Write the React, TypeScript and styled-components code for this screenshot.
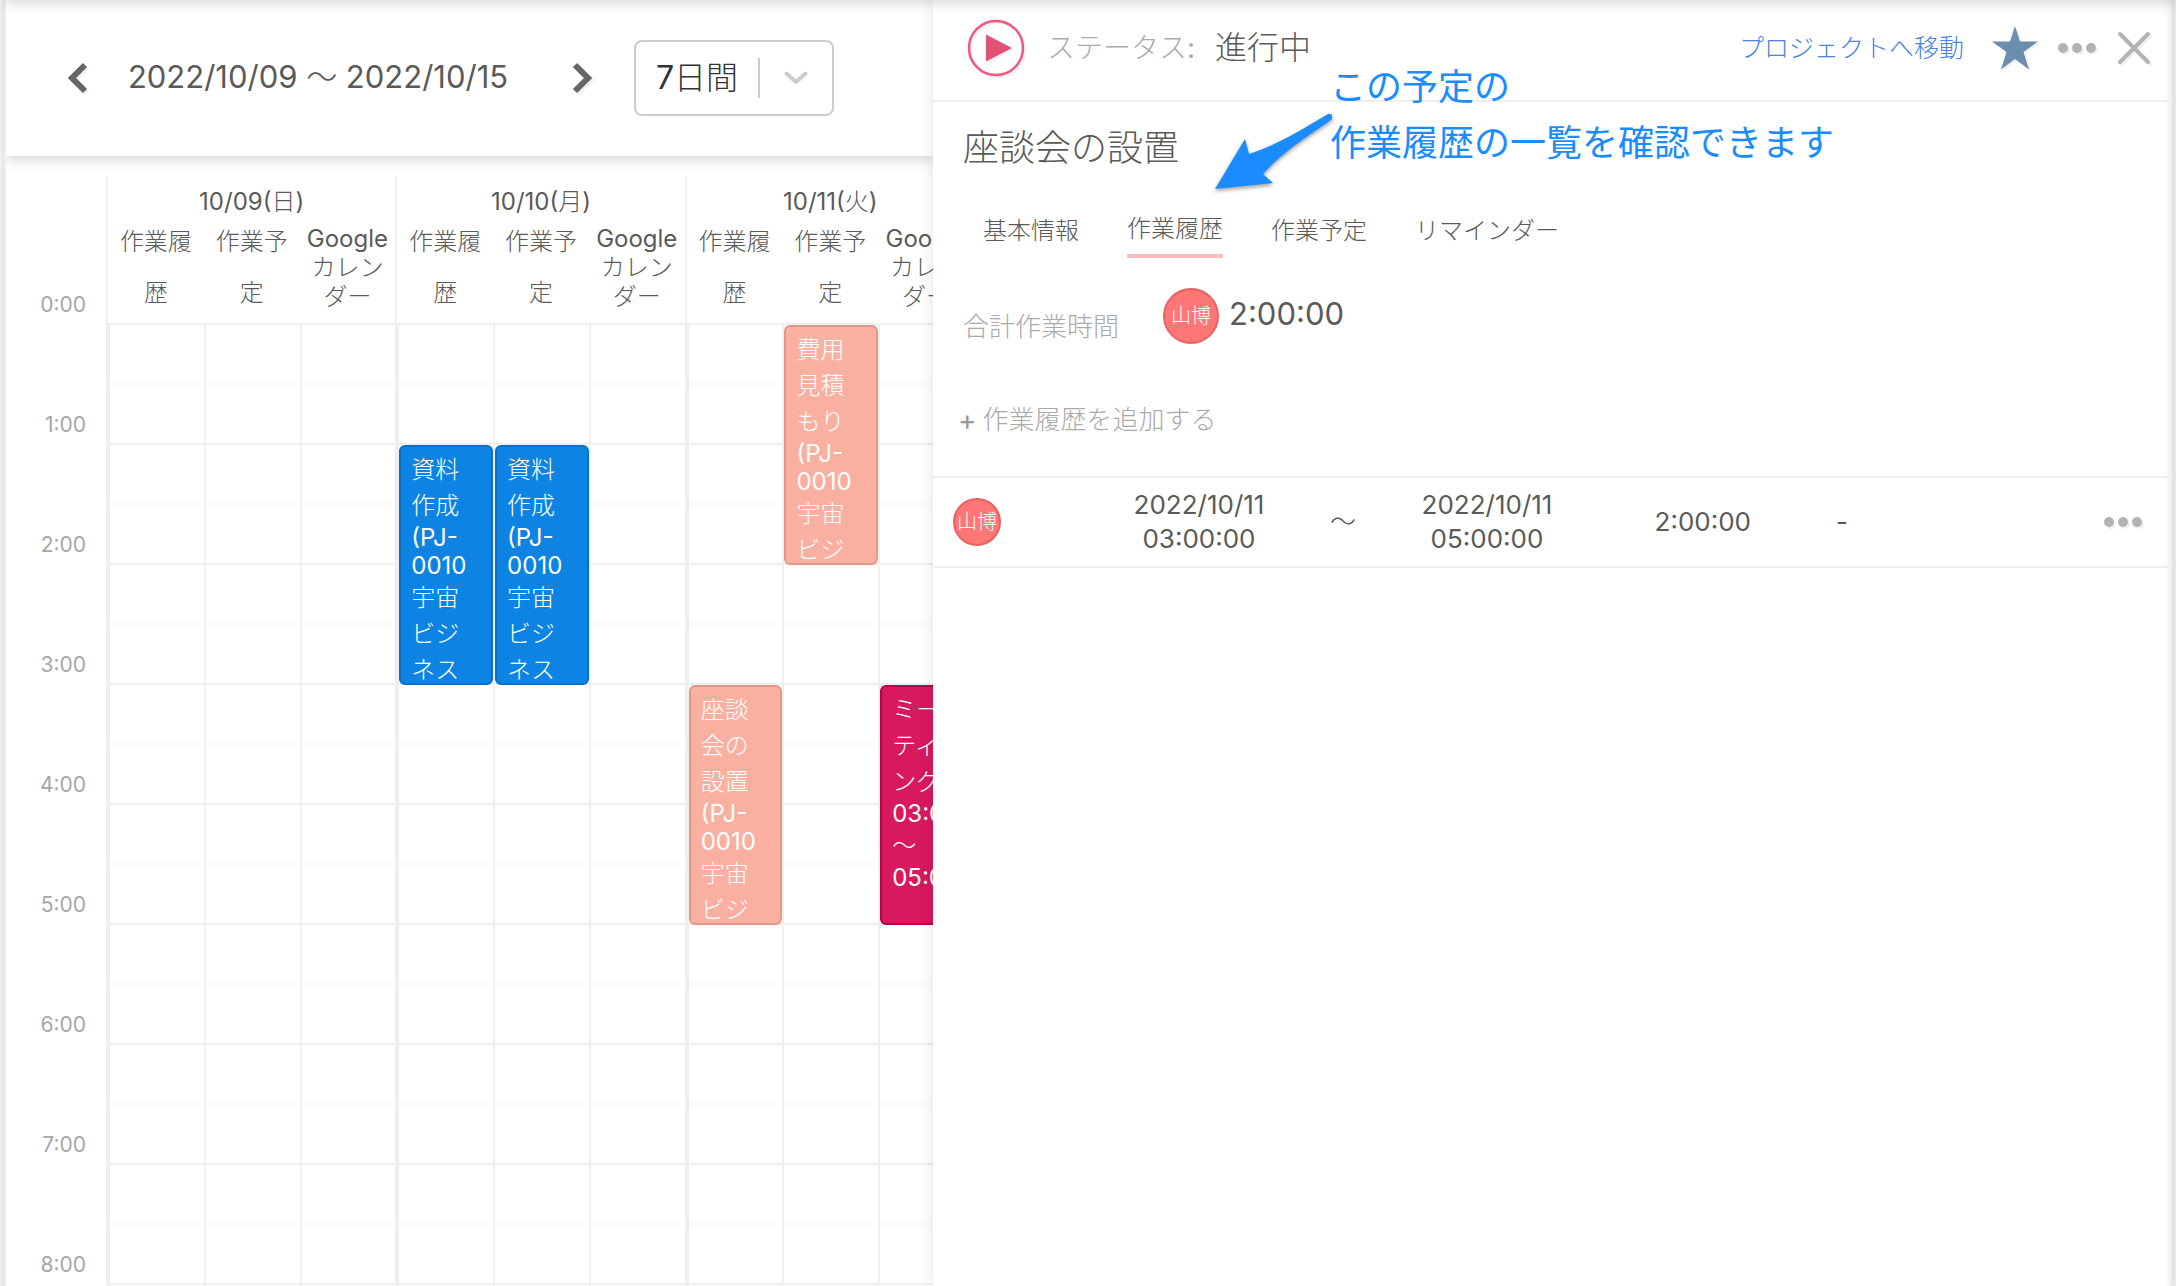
import React from "react";
import styled, { createGlobalStyle, css } from "styled-components";

const GlobalStyle = createGlobalStyle`
  *, *::before, *::after { box-sizing: border-box; }
  body {
    margin: 0;
    background: #fff;
    color: #5a5a58;
    font-family: Inter, "Noto Sans CJK JP Light", "Noto Sans CJK JP", sans-serif;
    font-size: 24px;
    font-weight: 400;
    line-height: 36px;
  }
  button, select { font: inherit; color: inherit; background: none; border: 0; margin: 0; padding: 0; cursor: pointer; }
  h1, h2, p, dl, dt, dd { margin: 0; font: inherit; }
`;

const Page = styled.div`
  position: relative;
  display: flex;
  height: 100vh;
  overflow: hidden;
  padding: 0 4px 0 6px;
  background: linear-gradient(90deg, #efefef 2px, #e6e6e6 2px 4px, #efefef 4px);
  &::before {
    content: "";
    position: absolute;
    inset: -10px 0 auto 6px;
    height: 10px;
    z-index: 3;
    box-shadow: 0 2px 12px 2px rgba(0, 0, 0, 0.14);
    pointer-events: none;
  }
`;

/* ---------- calendar ---------- */

const CalendarPane = styled.main`
  flex: 927 1 0;
  min-width: 0;
  overflow: hidden;
  background: #fff;
`;

const Toolbar = styled.header`
  position: relative;
  z-index: 1;
  display: flex;
  align-items: center;
  height: 156px;
  padding-left: 56px;
  box-shadow: 0 2px 12px 2px rgba(0, 0, 0, 0.16);
  background: #fff;
`;

const IconButton = styled.button`
  display: flex;
  align-items: center;
  justify-content: center;
  flex: none;
  svg { display: block; filter: drop-shadow(2px 2px 0 rgba(0, 0, 0, 0.06)); }
`;

const DateRange = styled.h1`
  width: 472px;
  padding: 0 24px 2px 0;
  text-align: center;
  white-space: nowrap;
  font-size: 31px;
  line-height: 48px;
`;

const SelectBox = styled.label`
  display: flex;
  align-items: center;
  width: 200px;
  height: 76px;
  margin-left: 36px;
  border: 2px solid #ccc;
  border-radius: 8px;
  color: #333;
  select {
    appearance: none;
    outline: none;
    width: 122px;
    height: 72px;
    padding-left: 20px;
    font-size: 32px;
  }
  svg { margin: 0 auto; }
`;

const SelectDivider = styled.span`
  width: 2px;
  height: 40px;
  background: #ccc;
`;

const Calendar = styled.div`
  display: grid;
  grid-template-columns: 100px repeat(3, 1fr);
  width: 968px;
  padding-top: 20px;
`;

const HourColumn = styled.ol`
  margin: 0;
  padding: 111px 20px 0 0;
  list-style: none;
  text-align: right;
  font-size: 21px;
  color: #a6a6a6;
`;

const Hour = styled.li`
  height: 120px;
`;

const Day = styled.section`
  border-left: 2px solid #efefef;
`;

const DayHead = styled.div`
  display: grid;
  grid-template-columns: repeat(3, 1fr);
  align-content: start;
  height: 149px;
  border-bottom: 2px solid #efefef;
  text-align: center;
`;

const DayTitle = styled.h2`
  grid-column: 1 / -1;
  padding-top: 8px;
`;

const Lane = styled.p<{ $tall?: boolean }>`
  padding: 4px 4px 0;
  line-height: 29px;
  ${(p) => p.$tall && css`
    line-height: 51px;
    padding-top: 0;
    margin-top: -4px;
  `}
`;

const DayBody = styled.div`
  display: grid;
  grid-template-columns: repeat(3, 1fr);
`;

const Track = styled.div`
  display: grid;
  grid-template-columns: minmax(0, 1fr);
  grid-template-rows: repeat(18, 60px);
  border-left: 2px solid #efefef;
`;

const Slot = styled.div<{ $row: number }>`
  grid-column: 1;
  grid-row: ${(p) => p.$row};
  border-bottom: 2px solid ${(p) => (p.$row % 2 ? "#f9f9f9" : "#efefef")};
`;

const tones = {
  blue: ["#0d83e4", "#066fcc"],
  salmon: ["#fab0a0", "#e39888"],
  pink: ["#d8195e", "#b8004a"],
};

const EventCard = styled.article<{ $start: number; $tone: keyof typeof tones }>`
  grid-column: 1;
  grid-row: ${(p) => p.$start * 2 + 1} / span 4;
  overflow: hidden;
  padding: 5px 0 0 10px;
  border: 2px solid ${(p) => tones[p.$tone][1]};
  border-radius: 6px;
  background: ${(p) => tones[p.$tone][0]};
  color: #fff;
`;

const EventLine = styled.span<{ $latin: boolean }>`
  display: block;
  white-space: nowrap;
  line-height: ${(p) => (p.$latin ? 28 : 36)}px;
`;

/* ---------- detail panel ---------- */

const Panel = styled.aside`
  position: relative;
  z-index: 2;
  flex: 1239 1 0;
  min-width: 0;
  background: #fff;
  box-shadow: 0 0 14px rgba(0, 0, 0, 0.12), inset -10px 0 10px -10px rgba(0, 0, 0, 0.16);
`;

const PanelHeader = styled.header`
  display: flex;
  align-items: center;
  height: 102px;
  padding: 0 20px 4px 34px;
  border-bottom: 2px solid #efefef;
`;

const StatusLabel = styled.span`
  margin: 0 20px 0 22px;
  font-size: 28px;
  color: #aaa;
`;

const StatusValue = styled.span`
  flex: 1;
  font-size: 32px;
`;

const ProjectLink = styled.a`
  margin-right: 28px;
  font-size: 25px;
  color: #4a82e6;
  text-decoration: none;
`;

const Actions = styled.div`
  display: flex;
  align-items: center;
  gap: 20px;
`;

const Title = styled.h2`
  padding: 20px 30px 0;
  font-size: 36px;
  line-height: 52px;
`;

const Tabs = styled.nav`
  display: flex;
  gap: 48px;
  padding: 36px 50px 0;
`;

const Tab = styled.button<{ $active?: boolean }>`
  height: 48px;
  padding-bottom: ${(p) => (p.$active ? 6 : 2)}px;
  border-bottom: 4px solid ${(p) => (p.$active ? "#ffbcbc" : "transparent")};
`;

const Total = styled.dl`
  display: flex;
  padding: 30px 30px 0;
  dt {
    width: 200px;
    padding-top: 21px;
    font-size: 26px;
    color: #aaa;
  }
  dd {
    display: flex;
    gap: 10px;
    font-size: 31px;
    line-height: 52px;
  }
`;

const Avatar = styled.span<{ $size: number }>`
  display: flex;
  align-items: center;
  justify-content: center;
  width: ${(p) => p.$size}px;
  height: ${(p) => p.$size}px;
  border: 2px solid #e96161;
  border-radius: 50%;
  background: #ff7676;
  color: #fff;
  font-size: 20px;
  line-height: 28px;
`;

const AddButton = styled.button`
  display: flex;
  gap: 6px;
  margin: 57px 0 38px 25px;
  font-size: 26px;
  color: #aaa;
`;

const PlusSign = styled.span`
  font-size: 28px;
  color: #999;
`;

const History = styled.table`
  width: 100%;
  table-layout: fixed;
  border-collapse: collapse;
  font-size: 26px;
  line-height: 34px;
`;

const HistoryRow = styled.tr`
  height: 90px;
  border-top: 2px solid #efefef;
  border-bottom: 2px solid #efefef;
`;

const Cell = styled.td<{ $align?: "left" | "right" }>`
  padding: 0;
  text-align: ${(p) => p.$align ?? "center"};
`;

const AvatarCell = styled(Cell)`
  padding-left: 20px;
`;

const NoteCell = styled(Cell)`
  padding-left: 85px;
`;

const MenuCell = styled(Cell)`
  padding-right: 30px;
  button { margin-left: auto; }
`;

/* ---------- callout ---------- */

const Callout = styled.div`
  position: absolute;
  top: 56px;
  left: 397px;
  white-space: nowrap;
  font-family: "Noto Sans CJK JP", sans-serif;
  font-size: 36px;
  line-height: 56px;
  color: #1a8cff;
`;

const CalloutArrow = styled.svg`
  position: absolute;
  top: 108px;
  left: 278px;
  filter: drop-shadow(0 2px 2px rgba(0, 0, 0, 0.4));
`;

const Dots = () => (
  <svg width="38" height="10" viewBox="0 0 38 10" fill="#b3b3b3">
    <circle cx="5" cy="5" r="5" />
    <circle cx="19" cy="5" r="5" />
    <circle cx="33" cy="5" r="5" />
  </svg>
);

type EventData = { lane: number; start: number; tone: keyof typeof tones; lines: string[] };

const days: { title: string; events: EventData[] }[] = [
  { title: "10/09(日)", events: [] },
  {
    title: "10/10(月)",
    events: [0, 1].map((lane) => ({
      lane,
      start: 1,
      tone: "blue" as const,
      lines: ["資料", "作成", "(PJ-", "0010", "宇宙", "ビジ", "ネス"],
    })),
  },
  {
    title: "10/11(火)",
    events: [
      { lane: 1, start: 0, tone: "salmon", lines: ["費用", "見積", "もり", "(PJ-", "0010", "宇宙", "ビジ"] },
      { lane: 0, start: 3, tone: "salmon", lines: ["座談", "会の", "設置", "(PJ-", "0010", "宇宙", "ビジ"] },
      { lane: 2, start: 3, tone: "pink", lines: ["ミー", "ティ", "ング", "03:00", "〜", "05:00"] },
    ],
  },
];

const slots = Array.from({ length: 18 }, (_, i) => i + 1);
const isLatin = (s: string) => /^[\x20-\x7e]+$/.test(s);

export default function App() {
  return (
    <>
      <GlobalStyle />
      <Page>
        <CalendarPane>
          <Toolbar>
            <IconButton aria-label="前の週">
              <svg width="32" height="32" viewBox="0 0 32 32" fill="none" stroke="#666" strokeWidth="6">
                <path d="M23 3 10 16 23 29" />
              </svg>
            </IconButton>
            <DateRange>2022/10/09 〜 2022/10/15</DateRange>
            <IconButton aria-label="次の週">
              <svg width="32" height="32" viewBox="0 0 32 32" fill="none" stroke="#666" strokeWidth="6">
                <path d="M9 3 22 16 9 29" />
              </svg>
            </IconButton>
            <SelectBox>
              <select aria-label="表示期間" defaultValue="7">
                <option value="7">7日間</option>
              </select>
              <SelectDivider />
              <svg width="24" height="16" viewBox="0 0 24 16" fill="none" stroke="#ccc" strokeWidth="4" strokeLinecap="round" strokeLinejoin="round">
                <path d="M2.500 3.500 12 12 21.500 3.500" />
              </svg>
            </SelectBox>
          </Toolbar>
          <Calendar>
            <HourColumn>
              {slots.slice(0, 9).map((n) => (
                <Hour key={n}>{n - 1}:00</Hour>
              ))}
            </HourColumn>
            {days.map((day) => (
              <Day key={day.title}>
                <DayHead>
                  <DayTitle>{day.title}</DayTitle>
                  <Lane $tall>作業履歴</Lane>
                  <Lane $tall>作業予定</Lane>
                  <Lane>Google カレンダー</Lane>
                </DayHead>
                <DayBody>
                  {[0, 1, 2].map((lane) => (
                    <Track key={lane}>
                      {slots.map((row) => (
                        <Slot key={row} $row={row} />
                      ))}
                      {day.events
                        .filter((e) => e.lane === lane)
                        .map((e) => (
                          <EventCard key={e.start} $start={e.start} $tone={e.tone}>
                            {e.lines.map((line) => (
                              <EventLine key={line} $latin={isLatin(line)}>{line}</EventLine>
                            ))}
                          </EventCard>
                        ))}
                    </Track>
                  ))}
                </DayBody>
              </Day>
            ))}
          </Calendar>
        </CalendarPane>

        <Panel>
          <PanelHeader>
            <IconButton aria-label="開始">
              <svg width="58" height="58" viewBox="0 0 58 58">
                <circle cx="29" cy="29" r="27" fill="none" stroke="#f0587f" strokeWidth="2.500" />
                <path d="M19 15.500 45 29 19 42.500Z" fill="#e05273" />
              </svg>
            </IconButton>
            <StatusLabel>ステータス:</StatusLabel>
            <StatusValue>進行中</StatusValue>
            <ProjectLink href="#project">プロジェクトへ移動</ProjectLink>
            <Actions>
              <IconButton aria-label="お気に入り">
                <svg width="46" height="44" viewBox="0 0 46 44" fill="#6b8dae">
                  <path d="M23 0 28 15.500H46L31.500 26 37 43.500 23 33 9 43.500 14.500 26 0 15.500H18Z" />
                </svg>
              </IconButton>
              <IconButton aria-label="メニュー"><Dots /></IconButton>
              <IconButton aria-label="閉じる">
                <svg width="36" height="36" viewBox="0 0 36 36" stroke="#b3b3b3" strokeWidth="4" strokeLinecap="round">
                  <path d="M4 4 32 32M32 4 4 32" />
                </svg>
              </IconButton>
            </Actions>
          </PanelHeader>
          <Title>座談会の設置</Title>
          <Tabs>
            <Tab>基本情報</Tab>
            <Tab $active>作業履歴</Tab>
            <Tab>作業予定</Tab>
            <Tab>リマインダー</Tab>
          </Tabs>
          <Total>
            <dt>合計作業時間</dt>
            <dd>
              <Avatar $size={56}>山博</Avatar>
              2:00:00
            </dd>
          </Total>
          <AddButton>
            <PlusSign>+</PlusSign>
            <span>作業履歴を追加する</span>
          </AddButton>
          <History>
            <colgroup>
              <col style={{ width: "194px" }} />
              <col style={{ width: "144px" }} />
              <col style={{ width: "144px" }} />
              <col style={{ width: "144px" }} />
              <col style={{ width: "192px" }} />
              <col />
              <col style={{ width: "80px" }} />
            </colgroup>
            <tbody>
              <HistoryRow>
                <AvatarCell><Avatar $size={48}>山博</Avatar></AvatarCell>
                <Cell>2022/10/11<br />03:00:00</Cell>
                <Cell>〜</Cell>
                <Cell>2022/10/11<br />05:00:00</Cell>
                <Cell $align="right">2:00:00</Cell>
                <NoteCell $align="left">-</NoteCell>
                <MenuCell><IconButton aria-label="履歴メニュー"><Dots /></IconButton></MenuCell>
              </HistoryRow>
            </tbody>
          </History>
          <Callout>
            この予定の<br />作業履歴の一覧を確認できます
          </Callout>
          <CalloutArrow width="128" height="88" viewBox="0 0 128 88" fill="#1a8cff">
            <path d="M4 81 34 31 38 46C68 36 90 22 117 6Q122 5 121 11C98 28 76 40 52 66L62 75Z" />
          </CalloutArrow>
        </Panel>
      </Page>
    </>
  );
}
